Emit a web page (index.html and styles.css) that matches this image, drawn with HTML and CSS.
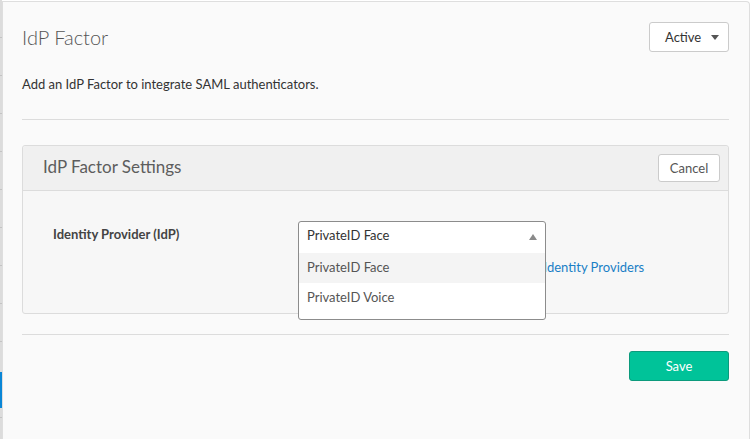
FILE: index.html
```html
<!DOCTYPE html>
<html lang="en">
<head>
<meta charset="utf-8">
<title>IdP Factor</title>
<link rel="stylesheet" href="styles.css">
</head>
<body>
<div class="page">
  <div class="rail"></div>
  <main class="card">
    <header class="card-head">
      <h1 class="title">IdP Factor</h1>
      <button class="status" type="button">Active <span class="caret-down"></span></button>
    </header>
    <p class="desc">Add an IdP Factor to integrate SAML authenticators.</p>
    <hr class="rule">
    <section class="panel">
      <div class="panel-head">
        <h2 class="panel-title">IdP Factor Settings</h2>
        <button class="btn" type="button">Cancel</button>
      </div>
      <div class="panel-body">
        <div class="field">
          <label class="field-label">Identity Provider (IdP)</label>
          <div class="field-control">
            <div class="select-wrap">
              <div class="dropdown">
                <div class="dropdown-value">PrivateID Face <span class="caret-up"></span></div>
                <ul class="options">
                  <li class="option hover">PrivateID Face</li>
                  <li class="option">PrivateID Voice</li>
                </ul>
              </div>
            </div>
            <p class="help">Configure your IdP providers via Security &gt; <a href="#" class="link">Identity Providers</a></p>
          </div>
        </div>
      </div>
    </section>
    <hr class="rule rule-bottom">
    <div class="actions">
      <button class="btn-save" type="button">Save</button>
    </div>
  </main>
</div>
</body>
</html>
```
FILE: styles.css
```css
* { box-sizing: border-box; }
html, body { margin: 0; padding: 0; background: #ffffff; }
body {
  font-family: "Lato", "Liberation Sans", sans-serif;
  font-size: 13px;
  color: #333;
  height: 439px;
  overflow: hidden;
}
.page {
  display: flex;
  height: 439px;
}
.rail {
  width: 2px;
  flex: 0 0 2px;
  background:
    linear-gradient(#0a86d6, #0a86d6) 0 372px / 2px 36px no-repeat,
    repeating-linear-gradient(to bottom, #dcdcdc 0, #dcdcdc 37px, #c4c4c4 37px, #c4c4c4 38px);
  background-color: #dcdcdc;
}
.card {
  flex: 1;
  margin: 1px 1px 0 0;
  background: #fafafa;
  border: 1px solid #dedede;
  border-bottom: none;
  border-top-right-radius: 4px;
  padding: 20px 20px 0 19px;
}
.card-head {
  display: flex;
  justify-content: space-between;
  align-items: flex-start;
}
.title {
  margin: 0;
  font-size: 20px;
  line-height: 30px;
  font-weight: 300;
  color: #555;
}
.status {
  width: 80px;
  height: 30px;
  display: flex;
  align-items: center;
  justify-content: space-between;
  padding: 0 9px 1px 15px;
  background: #fff;
  border: 1px solid #cbcbcb;
  border-radius: 3px;
  font: inherit;
  font-size: 13px;
  color: #333;
}
.caret-down {
  width: 0; height: 0;
  margin-top: 1px;
  border-left: 4px solid transparent;
  border-right: 4px solid transparent;
  border-top: 5px solid #555;
}
.desc {
  margin: 23px 0 0;
  line-height: 18px;
  color: #333;
}
.rule {
  border: 0;
  border-top: 1px solid #dcdcdc;
  margin: 26px 0 0;
  height: 0;
}
.panel {
  margin-top: 25px;
  border: 1px solid #dcdcdc;
  border-radius: 3px;
  background: #f7f7f7;
}
.panel-head {
  height: 45px;
  display: flex;
  align-items: center;
  justify-content: space-between;
  padding: 0 8px 0 20px;
  background: #f0f0f0;
  border-bottom: 1px solid #dcdcdc;
  border-radius: 3px 3px 0 0;
}
.panel-title {
  margin: 0 0 3px;
  font-size: 17px;
  font-weight: 400;
  color: #5d5d5d;
}
.btn {
  width: 62px;
  height: 28px;
  background: #fff;
  border: 1px solid #cbcbcb;
  border-radius: 3px;
  font: inherit;
  font-size: 13px;
  color: #555;
  padding: 0 0 1px;
}
.panel-body {
  padding: 30px 30px 37px;
}
.field {
  display: flex;
  align-items: flex-start;
}
.field-label {
  width: 245px;
  flex: 0 0 245px;
  line-height: 27px;
  font-weight: 700;
  color: #444;
}
.field-control {
  width: 247px;
}
.select-wrap {
  position: relative;
  height: 31px;
}
.dropdown {
  position: absolute;
  top: 0; left: 0;
  width: 248px;
  background: #fff;
  border: 1px solid #8c8c8c;
  border-radius: 3px;
  z-index: 2;
}
.dropdown-value {
  height: 31px;
  display: flex;
  align-items: center;
  justify-content: space-between;
  padding: 0 8px 5px 8px;
  color: #333;
}
.caret-up {
  width: 0; height: 0;
  margin-top: 4px;
  border-left: 4px solid transparent;
  border-right: 4px solid transparent;
  border-bottom: 6px solid #8a8a8a;
}
.options {
  list-style: none;
  margin: 0;
  padding: 0 0 6px;
}
.option {
  height: 30px;
  line-height: 28px;
  padding: 0 8px;
  color: #555;
}
.option.hover { background: #f4f4f4; }
.help {
  margin: 6px 0 0;
  line-height: 18px;
  white-space: nowrap;
  color: #555;
}
.link {
  color: #1a7fc6;
  text-decoration: none;
}
.rule-bottom { margin-top: 20px; }
.actions {
  display: flex;
  justify-content: flex-end;
  margin-top: 16px;
}
.btn-save {
  width: 100px;
  height: 30px;
  background: #00c399;
  border: 1px solid #0c9a7c;
  border-radius: 3px;
  color: #fff;
  font: inherit;
  font-size: 13px;
  padding: 0 0 1px;
}
```
